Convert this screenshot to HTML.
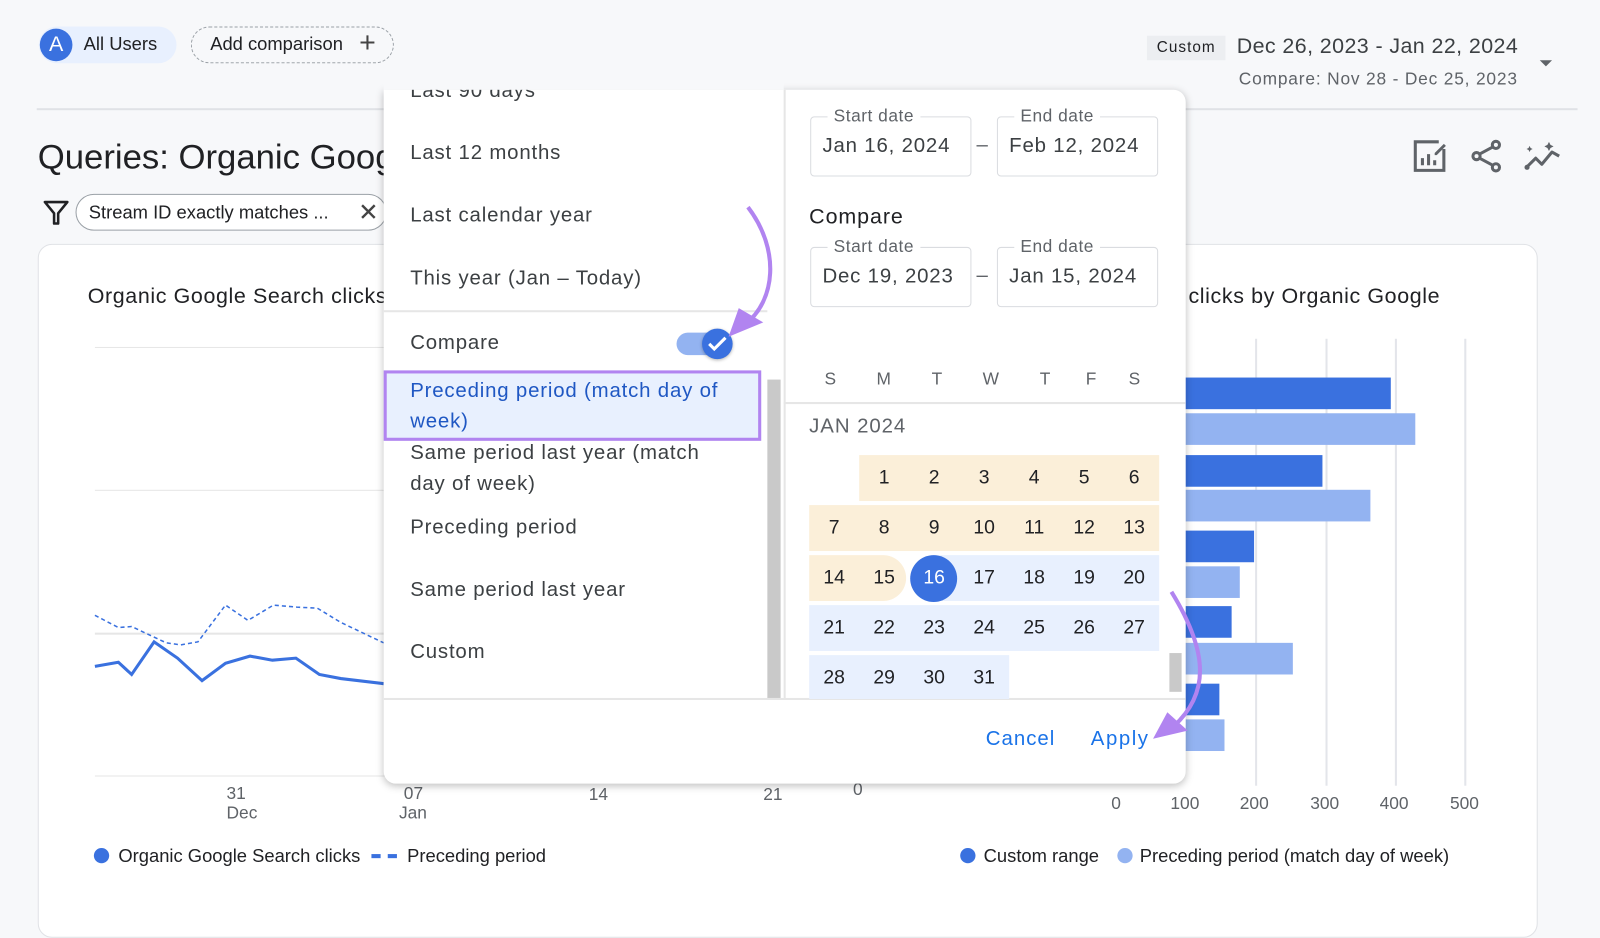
<!DOCTYPE html>
<html><head><meta charset="utf-8"><style>
*{box-sizing:border-box;margin:0;padding:0}
body{width:1600px;height:889px;overflow:hidden;background:#f7f8fa;font-family:"Liberation Sans",Arial,sans-serif;color:#202124;position:relative}
#w{position:absolute;left:0;top:0;width:1568px;height:872px;transform:scale(1.0204);transform-origin:0 0}
.a{position:absolute;white-space:nowrap}
.li{position:absolute;left:402px;font-size:20px;color:#3c4043;letter-spacing:0.8px}
.cell{position:absolute;width:49px;height:45px;text-align:center;line-height:45px;font-size:19px;color:#202124}
.bar{position:absolute;left:1161px;height:31px}
.dk{background:#3a71df}.lt{background:#93b3f1}
.fld{position:absolute;border:1px solid #dadce0;border-radius:4px;width:158px;height:59px;background:#fff}
.fld span{position:absolute;top:-11px;left:16px;background:#fff;padding:0 6px;font-size:17px;color:#5f6368;letter-spacing:0.5px}
.fld b{position:absolute;top:17px;left:11px;font-weight:normal;font-size:20px;color:#3c4043;letter-spacing:0.8px}
</style></head><body><div id="w">
<!-- top pills -->
<div class="a" style="left:38px;top:26px;width:135px;height:36px;background:#e8f0fe;border-radius:18px"></div>
<div class="a" style="left:39px;top:28px;width:32px;height:32px;border-radius:50%;background:#3a71df;color:#fff;font-size:21px;text-align:center;line-height:32px">A</div>
<div class="a" style="left:82px;top:33px;font-size:18px;color:#202124">All Users</div>
<div class="a" style="left:187px;top:26px;width:199px;height:36px;border:1.5px dashed #9aa0a6;border-radius:18px"></div>
<div class="a" style="left:206px;top:33px;font-size:18px">Add comparison</div>
<div class="a" style="left:352px;top:26px;font-size:28px;font-weight:300;color:#444">+</div>
<!-- date header -->
<div class="a" style="left:1124px;top:35px;width:77px;height:24px;background:#eceef1;font-size:15px;letter-spacing:1px;line-height:24px;text-align:center;color:#202124">Custom</div>
<div class="a" style="left:1212px;top:34px;font-size:21px;color:#3c4043;letter-spacing:0.4px">Dec 26, 2023 - Jan 22, 2024</div>
<div class="a" style="left:1214px;top:68px;font-size:17px;color:#5f6368;letter-spacing:0.8px">Compare: Nov 28 - Dec 25, 2023</div>
<div class="a" style="left:1509px;top:59px;border-left:6px solid transparent;border-right:6px solid transparent;border-top:6px solid #5f6368"></div>
<div class="a" style="left:36px;top:106px;width:1510px;height:2px;background:#e0e2e6"></div>
<!-- title -->
<div class="a" style="left:37px;top:135px;font-size:34px;color:#202124">Queries: Organic Goog</div>
<svg class="a" style="left:42px;top:195px" width="26" height="26" viewBox="0 0 26 26"><path d="M2 3h22L15 14v10h-4V14z" fill="none" stroke="#202124" stroke-width="2.5" stroke-linejoin="round"/></svg>
<div class="a" style="left:74px;top:190px;width:305px;height:36px;border:1.5px solid #9aa0a6;border-radius:18px;background:#fff"></div>
<div class="a" style="left:87px;top:198px;font-size:18px">Stream ID exactly matches ...</div>
<div class="a" style="left:351px;top:194px;font-size:24px;color:#444">✕</div>
<!-- icons -->
<svg class="a" style="left:1384px;top:136px" width="36" height="34" viewBox="0 0 36 34"><path d="M26 3H3v28h28V10" fill="none" stroke="#5f6368" stroke-width="3"/><path d="M10 26v-7M16 26v-11M22 26v-5" stroke="#5f6368" stroke-width="3"/><path d="M22 14l9-9 2 2-9 9h-2z" fill="#5f6368"/></svg>
<svg class="a" style="left:1440px;top:136px" width="34" height="34" viewBox="0 0 34 34"><circle cx="26" cy="6" r="3.5" fill="none" stroke="#5f6368" stroke-width="3"/><circle cx="7" cy="17" r="3.5" fill="none" stroke="#5f6368" stroke-width="3"/><circle cx="26" cy="28" r="3.5" fill="none" stroke="#5f6368" stroke-width="3"/><path d="M10 15l13-7M10 19l13 7" stroke="#5f6368" stroke-width="3"/></svg>
<svg class="a" style="left:1494px;top:138px" width="36" height="30" viewBox="0 0 36 30"><path d="M2 26l9-9 6 6 10-12 7 4" fill="none" stroke="#5f6368" stroke-width="3" stroke-linejoin="round"/><circle cx="2.5" cy="26" r="2.5" fill="#5f6368"/><path d="M5 5l1 2 2 1-2 1-1 2-1-2-2-1 2-1zM24 1l1.5 3 3 1.5-3 1.5-1.5 3-1.5-3-3-1.5 3-1.5z" fill="#5f6368"/></svg>
<!-- card -->
<div class="a" style="left:37px;top:239px;width:1470px;height:680px;background:#fff;border:1.5px solid #e0e2e6;border-radius:14px"></div>
<div class="a" style="left:86px;top:279px;font-size:21px;letter-spacing:0.6px">Organic Google Search clicks</div>
<div class="a" style="left:1146px;top:279px;font-size:21px;letter-spacing:0.6px">h clicks by Organic Google</div>
<!-- left chart -->
<div class="a" style="left:93px;top:340px;width:290px;height:1px;background:#e6e6e6"></div>
<div class="a" style="left:93px;top:480px;width:290px;height:1px;background:#e6e6e6"></div>
<div class="a" style="left:93px;top:620px;width:290px;height:2px;background:#e6e6e6"></div>
<div class="a" style="left:93px;top:760px;width:290px;height:1px;background:#e6e6e6"></div>
<svg class="a" style="left:0;top:590px" width="380" height="100"><polyline points="93,13 116,25 129,24 148,33 163,40 177,42 194,39 221,3 243,18 268,3 291,5 311,6 334,20 376,40" fill="none" stroke="#3a71df" stroke-width="1.5" stroke-dasharray="4,3"/><polyline points="93,63 116,59 129,71 151,39 174,55 198,77 221,60 245,53 267,57 290,55 313,71 334,75 376,80" fill="none" stroke="#3a71df" stroke-width="3"/></svg>
<div class="a" style="left:222px;top:768px;font-size:17px;color:#5f6368;line-height:19px">31<br>Dec</div>
<div class="a" style="left:391px;top:768px;font-size:17px;color:#5f6368;line-height:19px">&nbsp;07<br>Jan</div>
<div class="a" style="left:577px;top:769px;font-size:17px;color:#5f6368">14</div>
<div class="a" style="left:748px;top:769px;font-size:17px;color:#5f6368">21</div>
<div class="a" style="left:836px;top:764px;font-size:17px;color:#5f6368">0</div>
<!-- right chart -->
<div class="a" style="left:1230px;top:332px;width:2px;height:438px;background:#e3e5ea"></div>
<div class="a" style="left:1299px;top:332px;width:2px;height:438px;background:#e3e5ea"></div>
<div class="a" style="left:1367px;top:332px;width:2px;height:438px;background:#e3e5ea"></div>
<div class="a" style="left:1435px;top:332px;width:2px;height:438px;background:#e3e5ea"></div>
<div class="bar dk" style="top:370px;width:202px"></div>
<div class="bar lt" style="top:405px;width:226px"></div>
<div class="bar dk" style="top:446px;width:135px"></div>
<div class="bar lt" style="top:480px;width:182px"></div>
<div class="bar dk" style="top:520px;width:68px"></div>
<div class="bar lt" style="top:555px;width:54px"></div>
<div class="bar dk" style="top:594px;width:46px"></div>
<div class="bar lt" style="top:630px;width:106px"></div>
<div class="bar dk" style="top:670px;width:34px"></div>
<div class="bar lt" style="top:705px;width:39px"></div>
<div class="a" style="left:1089px;top:778px;font-size:17px;color:#5f6368">0</div>
<div class="a" style="left:1147px;top:778px;font-size:17px;color:#5f6368">100</div>
<div class="a" style="left:1215px;top:778px;font-size:17px;color:#5f6368">200</div>
<div class="a" style="left:1284px;top:778px;font-size:17px;color:#5f6368">300</div>
<div class="a" style="left:1352px;top:778px;font-size:17px;color:#5f6368">400</div>
<div class="a" style="left:1421px;top:778px;font-size:17px;color:#5f6368">500</div>
<!-- legends -->
<div class="a" style="left:92px;top:831px;width:15px;height:15px;border-radius:50%;background:#3a71df"></div>
<div class="a" style="left:116px;top:829px;font-size:18px">Organic Google Search clicks</div>
<div class="a" style="left:364px;top:837px;width:9px;height:4px;background:#3a71df"></div>
<div class="a" style="left:380px;top:837px;width:9px;height:4px;background:#3a71df"></div>
<div class="a" style="left:399px;top:829px;font-size:18px">Preceding period</div>
<div class="a" style="left:941px;top:831px;width:15px;height:15px;border-radius:50%;background:#3a71df"></div>
<div class="a" style="left:964px;top:829px;font-size:18px">Custom range</div>
<div class="a" style="left:1095px;top:831px;width:15px;height:15px;border-radius:50%;background:#93b3f1"></div>
<div class="a" style="left:1117px;top:829px;font-size:18px">Preceding period (match day of week)</div>
<!-- popup -->
<div class="a" style="left:376px;top:88px;width:786px;height:680px;background:#fff;border-radius:0 12px 12px 12px;box-shadow:0 2px 8px rgba(0,0,0,.25);overflow:hidden">
 <div class="a" style="left:392px;top:0;width:2px;height:597px;background:#e6e6e6"></div>
 <div class="a" style="left:0;top:596px;width:786px;height:2px;background:#e6e6e6"></div>
 <div class="a" style="left:0;top:216px;width:376px;height:2px;background:#e6e6e6"></div>
 <div class="a" style="left:376px;top:284px;width:13px;height:312px;background:#c9c9c9"></div>
 <div class="a" style="left:392px;top:306px;width:394px;height:2px;background:#e6e6e6"></div>
 <div class="a" style="left:770px;top:552px;width:12px;height:38px;background:#c9c9c9"></div>
</div>
<div class="li" style="top:78px">Last 90 days</div>
<div class="a" style="left:376px;top:70px;width:392px;height:18px;background:#f7f8fa"></div>
<div class="li" style="top:139px">Last 12 months</div>
<div class="li" style="top:200px">Last calendar year</div>
<div class="li" style="top:262px">This year (Jan – Today)</div>
<div class="li" style="top:325px">Compare</div>
<div class="a" style="left:663px;top:326px;width:50px;height:22px;border-radius:11px;background:#93b3f1"></div>
<div class="a" style="left:688px;top:322px;width:30px;height:30px;border-radius:50%;background:#3a71df;box-shadow:0 1px 3px rgba(0,0,0,.3)"></div>
<svg class="a" style="left:692px;top:327px" width="22" height="20"><path d="M3 10l5 5 11-11" fill="none" stroke="#fff" stroke-width="3"/></svg>
<div class="a" style="left:376px;top:363px;width:370px;height:69px;background:#e8f0fe;border:3.5px solid #b184f0"></div>
<div class="li" style="top:368px;color:#1f57c3;line-height:30px">Preceding period (match day of<br>week)</div>
<div class="li" style="top:429px;line-height:30px">Same period last year (match<br>day of week)</div>
<div class="li" style="top:506px">Preceding period</div>
<div class="li" style="top:567px">Same period last year</div>
<div class="li" style="top:628px">Custom</div>
<!-- date fields -->
<div class="fld" style="left:794px;top:114px"><span>Start date</span><b>Jan 16, 2024</b></div>
<div class="a" style="left:957px;top:131px;font-size:20px;color:#5f6368">–</div>
<div class="fld" style="left:977px;top:114px"><span>End date</span><b>Feb 12, 2024</b></div>
<div class="a" style="left:793px;top:201px;font-size:21px;color:#202124;letter-spacing:0.9px">Compare</div>
<div class="fld" style="left:794px;top:242px"><span>Start date</span><b>Dec 19, 2023</b></div>
<div class="a" style="left:957px;top:259px;font-size:20px;color:#5f6368">–</div>
<div class="fld" style="left:977px;top:242px"><span>End date</span><b>Jan 15, 2024</b></div>
<!-- calendar -->
<div class="a" style="left:808px;top:362px;font-size:17px;color:#5f6368">S</div>
<div class="a" style="left:859px;top:362px;font-size:17px;color:#5f6368">M</div>
<div class="a" style="left:913px;top:362px;font-size:17px;color:#5f6368">T</div>
<div class="a" style="left:963px;top:362px;font-size:17px;color:#5f6368">W</div>
<div class="a" style="left:1019px;top:362px;font-size:17px;color:#5f6368">T</div>
<div class="a" style="left:1064px;top:362px;font-size:17px;color:#5f6368">F</div>
<div class="a" style="left:1106px;top:362px;font-size:17px;color:#5f6368">S</div>
<div class="a" style="left:793px;top:407px;font-size:20px;color:#5f6368;letter-spacing:0.9px">JAN 2024</div>
<div class="a" style="left:842px;top:446px;width:294px;height:45px;background:#fbefd9"></div>
<div class="a" style="left:793px;top:495px;width:343px;height:45px;background:#fbefd9"></div>
<div class="a" style="left:793px;top:544px;width:95px;height:45px;background:#fbefd9;border-radius:0 23px 23px 0"></div>
<div class="a" style="left:915px;top:544px;width:221px;height:45px;background:#e8f0fe"></div>
<div class="a" style="left:793px;top:593px;width:343px;height:45px;background:#e8f0fe"></div>
<div class="a" style="left:793px;top:642px;width:196px;height:43px;background:#e8f0fe"></div>
<div class="a" style="left:892px;top:544px;width:46px;height:46px;border-radius:50%;background:#3a71df"></div>
<div class="cell" style="left:842px;top:446px">1</div><div class="cell" style="left:891px;top:446px">2</div><div class="cell" style="left:940px;top:446px">3</div><div class="cell" style="left:989px;top:446px">4</div><div class="cell" style="left:1038px;top:446px">5</div><div class="cell" style="left:1087px;top:446px">6</div>
<div class="cell" style="left:793px;top:495px">7</div><div class="cell" style="left:842px;top:495px">8</div><div class="cell" style="left:891px;top:495px">9</div><div class="cell" style="left:940px;top:495px">10</div><div class="cell" style="left:989px;top:495px">11</div><div class="cell" style="left:1038px;top:495px">12</div><div class="cell" style="left:1087px;top:495px">13</div>
<div class="cell" style="left:793px;top:544px">14</div><div class="cell" style="left:842px;top:544px">15</div><div class="cell" style="left:891px;top:544px;color:#fff">16</div><div class="cell" style="left:940px;top:544px">17</div><div class="cell" style="left:989px;top:544px">18</div><div class="cell" style="left:1038px;top:544px">19</div><div class="cell" style="left:1087px;top:544px">20</div>
<div class="cell" style="left:793px;top:593px">21</div><div class="cell" style="left:842px;top:593px">22</div><div class="cell" style="left:891px;top:593px">23</div><div class="cell" style="left:940px;top:593px">24</div><div class="cell" style="left:989px;top:593px">25</div><div class="cell" style="left:1038px;top:593px">26</div><div class="cell" style="left:1087px;top:593px">27</div>
<div class="cell" style="left:793px;top:642px">28</div><div class="cell" style="left:842px;top:642px">29</div><div class="cell" style="left:891px;top:642px">30</div><div class="cell" style="left:940px;top:642px">31</div>
<div class="a" style="left:966px;top:713px;font-size:20px;color:#1a73e8;letter-spacing:1px">Cancel</div>
<div class="a" style="left:1069px;top:713px;font-size:20px;color:#1a73e8;letter-spacing:1.5px">Apply</div>
<!-- arrows -->
<svg class="a" style="left:0;top:0" width="1600" height="889"><path d="M733 203C765 245 760 295 730 318" fill="none" stroke="#b184f0" stroke-width="4"/><path d="M714 330l10-28 24 14z" fill="#b184f0"/><path d="M1148 580C1185 640 1185 680 1150 712" fill="none" stroke="#b184f0" stroke-width="4"/><path d="M1130 724l14-26 20 18z" fill="#b184f0"/></svg>
</div></body></html>
